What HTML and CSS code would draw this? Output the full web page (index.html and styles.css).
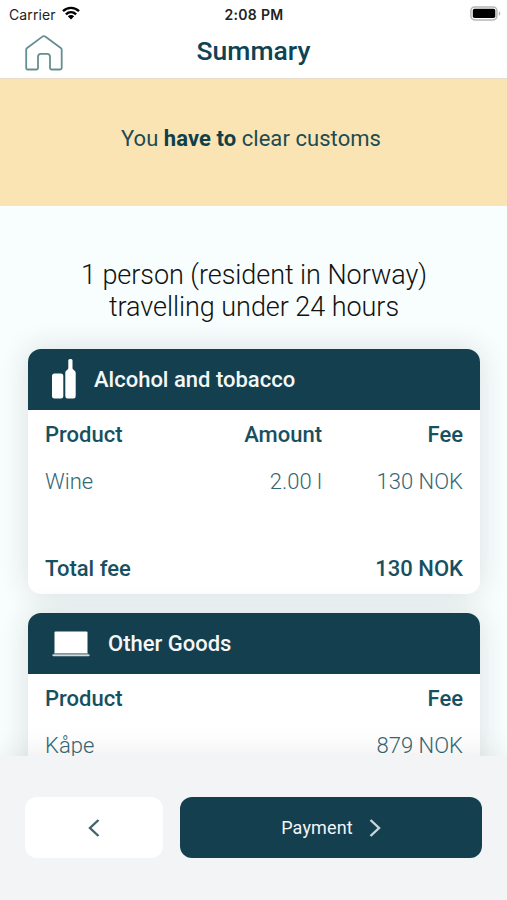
FILE: index.html
```html
<!DOCTYPE html>
<html lang="en">
<head>
<meta charset="utf-8">
<title>Summary</title>
<link rel="stylesheet" href="styles.css">
</head>
<body>
<div class="app">
  <div class="status">
    <div class="carrier"><span>Carrier</span>
      <svg width="18" height="14" viewBox="0 0 18 14" fill="none" stroke="#000" stroke-width="2.4"><path d="M1 5.200C5.500.8 12.500.8 17 5.200M3.900 8.300c3-2.800 7.200-2.800 10.200 0"/><path d="M9 13.500 5.800 10.300c1.800-1.700 4.600-1.700 6.400 0Z" fill="#000" stroke="none"/></svg>
    </div>
    <time class="clock">2:08 PM</time>
    <svg class="battery" width="31" height="15" viewBox="0 0 31 15"><rect x=".9" y=".9" width="26" height="13" rx="3.800" fill="#fff" stroke="#b5b5b5" stroke-width="1.500"/><rect x="2.800" y="2.800" width="22.500" height="9.300" rx="1.800"/><path d="M28.800 5.200c2 .8 2 3.800 0 4.600Z" fill="#b5b5b5"/></svg>
  </div>
  <header class="topbar">
    <svg class="home" width="38" height="36" viewBox="0 0 38 36" fill="none" stroke="#648f92" stroke-width="1.800" stroke-linejoin="round"><path d="M1.200 14.800Q1.200 13.700 2.100 13L17.400 1.600Q18.800.7 20.200 1.600L35.800 13Q36.700 13.700 36.700 14.800V33Q36.700 34.500 35.200 34.500H26.500Q25 34.500 25 33V22Q25 18.800 22 18.800H16Q13 18.800 13 22V33Q13 34.500 11.500 34.500H2.700Q1.200 34.500 1.200 33Z"/></svg>
    <h1>Summary</h1>
  </header>
  <section class="notice"><p>You <b>have to</b> clear customs</p></section>
  <main class="content">
    <h2>1 person (resident in Norway)<br>travelling under 24 hours</h2>
    <section class="card">
      <div class="card-head">
        <svg class="bottles" width="24" height="40" viewBox="0 0 24 40" fill="#fff"><rect x="0" y="14.500" width="11.300" height="25" rx="2.500"/><path d="M16.300 1.500Q16.300 0 17.800 0h1.200Q20.500 0 20.500 1.500V9c0 2 3.200 2 3.200 5V37Q23.700 39.500 21.500 39.500H15.500Q13.300 39.500 13.300 37V14c0-3 3-3 3-5Z"/></svg>
        <h3>Alcohol and tobacco</h3>
      </div>
      <div class="row strong"><span>Product</span><span>Amount</span><span>Fee</span></div>
      <div class="row"><span>Wine</span><span>2.00 l</span><span>130 NOK</span></div>
      <div class="row strong total"><span>Total fee</span><span></span><span>130 NOK</span></div>
    </section>
    <section class="card">
      <div class="card-head">
        <svg width="38" height="26" viewBox="0 0 38 26"><path d="M2.500 1.500Q2.500.5 3.500.5H34.500Q35.500.5 35.500 1.500V22H2.500Z" fill="#fff"/><path d="M2.500 22h33l2 2H.5Z" fill="#87979f"/><path d="M0 23.800H38L37 25.300H1Z" fill="#d3dce0"/></svg>
        <h3>Other Goods</h3>
      </div>
      <div class="row strong"><span>Product</span><span></span><span>Fee</span></div>
      <div class="row"><span>Kåpe</span><span></span><span>879 NOK</span></div>
    </section>
  </main>
  <footer class="actions">
    <button class="back" aria-label="Back"><svg width="12" height="18" viewBox="0 0 12 18" fill="none" stroke="#416570" stroke-width="2.400"><path d="M10.500 1 2 9l8.500 8"/></svg></button>
    <button class="pay"><span>Payment</span><svg width="12" height="18" viewBox="0 0 12 18" fill="none" stroke="#cbd5dc" stroke-width="2.400"><path d="m1.500 1 8.500 8-8.500 8"/></svg></button>
  </footer>
</div>
</body>
</html>
```
FILE: styles.css
```css
* { box-sizing: border-box; }
body { margin: 0; font-family: Roboto, "Liberation Sans", sans-serif; color: #175061; }
h1, h2, h3, p { margin: 0; }
.app { width: 507px; height: 900px; display: flex; flex-direction: column; overflow: hidden; background: #f8fdfd; }
.status { flex: none; height: 28px; padding: 0 6px 0 9px; display: grid; grid-template-columns: 1fr auto 1fr; align-items: center; background: #fff; font-family: Inter, sans-serif; font-size: 14px; color: #222; }
.carrier { display: flex; align-items: center; gap: 6px; letter-spacing: .1px; }
.carrier svg { margin-top: -2px; }
.clock { font-weight: 600; letter-spacing: .3px; margin-right: 2px; }
.battery { justify-self: end; margin-top: -2px; }
.topbar { flex: none; height: 51px; padding: 0 25px; display: grid; grid-template-columns: 38px 1fr 38px; background: #fff; border-bottom: 1px solid #eadccc; }
.home { margin-top: 7px; }
h1 { font-size: 26.5px; line-height: 45px; font-weight: 500; text-align: center; color: #0e4352; }
.notice { flex: none; height: 127px; padding: 45px 5px 0 0; text-align: center; background: #fae4b4; font-size: 22px; letter-spacing: .06px; line-height: 30px; color: #214b52; }
.notice b { color: #103f4c; }
.content { flex: 1; min-height: 0; overflow: hidden; padding: 53px 27px 0 28px; }
h2 { margin-bottom: 26px; font-size: 27px; letter-spacing: -.05px; line-height: 32px; font-weight: 300; text-align: center; color: #111; }
.card { margin-bottom: 19px; border-radius: 13px; background: #fff; box-shadow: 0 0 30px #26303824; padding-bottom: 2px; }
.card-head { height: 61px; padding-left: 24px; display: flex; align-items: center; gap: 18px; border-radius: 13px 13px 0 0; background: #143f4e; color: #f4f7f8; }
.bottles { margin-top: -2px; }
h3 { font-size: 22px; font-weight: 500; line-height: 30px; }
.row { height: 46px; margin: 0 17px; display: grid; grid-template-columns: 1fr 130px 141px; align-items: center; font-size: 22px; font-weight: 300; color: #356673; }
.row span:nth-child(n+2) { text-align: right; }
.strong { height: 48px; font-weight: 500; color: #175061; }
.total { height: 48px; margin-top: 40px; }
.actions { flex: none; height: 144px; padding: 41px 25px 0; display: flex; gap: 17px; background: #f2f4f6; box-shadow: 0 0 30px #00000018; position: relative; }
button { height: 61px; border: 0; border-radius: 12px; display: flex; align-items: center; justify-content: center; font-family: inherit; }
.back { width: 138px; background: #fff; }
.pay { flex: 1; gap: 16px; background: #143f4e; color: #f2f5f7; font-size: 18px; letter-spacing: .15px; }
```
